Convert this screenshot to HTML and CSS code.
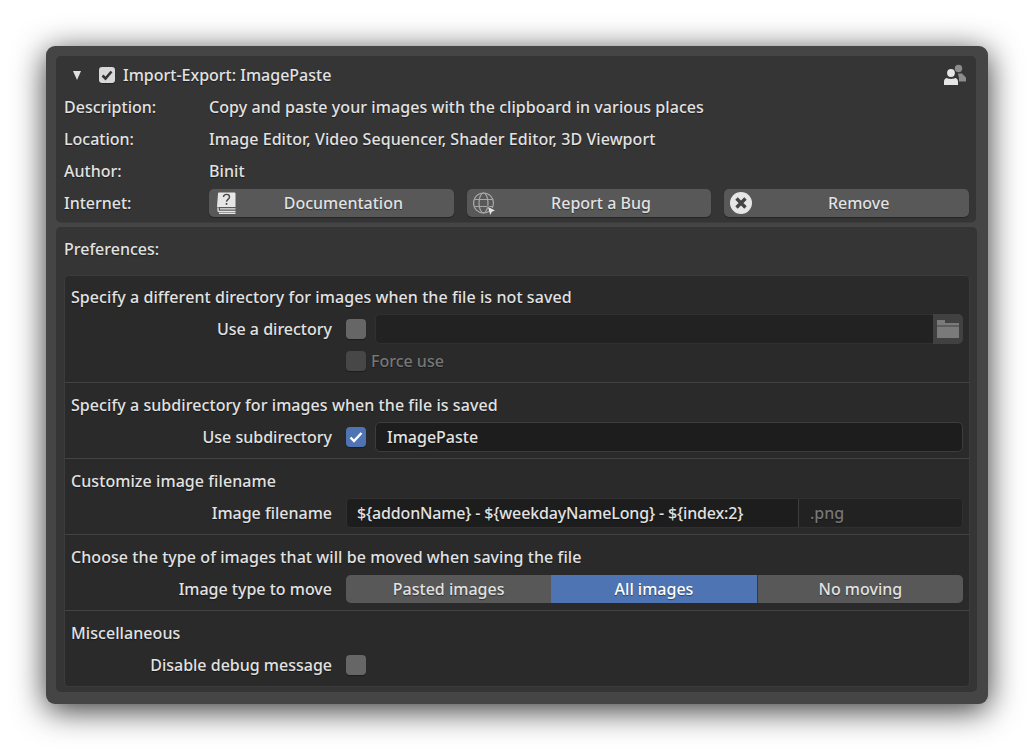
FILE: index.html
```html
<!DOCTYPE html>
<html lang="en">
<head>
    <meta charset="UTF-8">
    <title>Import-Export: ImagePaste</title>
    <link rel="stylesheet" href="styles.css">
</head>
<body>
    <div class="window">
        <div class="addon-panel">
            <div class="addon-head">
                <span class="arrow"></span>
                <span class="check check-light">
                    <svg viewBox="0 0 16 16" width="16" height="16"><path d="M3.500 8.500l3 3 6-7" fill="none" stroke="#333" stroke-width="2.600"/></svg>
                </span>
                <span class="addon-title">Import-Export: ImagePaste</span>
                <svg class="users-icon" viewBox="0 0 22 22" width="22" height="22">
                    <circle cx="14.500" cy="4.500" r="3.700" fill="#8c8c8c"/>
                    <path d="M14 9.500h4l4 4v4h-7z" fill="#8c8c8c"/>
                    <path d="M-1 22v-7l4-3 3-6h4l3 3 2 5v8z" fill="#353535"/>
                    <circle cx="7" cy="9" r="3.900" fill="#e6e6e6"/>
                    <path d="M0 21v-3.500c0-2 1.500-3.500 3-3.500 1.500 1.200 6.500 1.200 8 0 1.500 0 3 1.500 3 3.500V21z" fill="#e6e6e6"/>
                </svg>
            </div>
            <div class="info-row"><span class="info-label">Description:</span><span class="info-text">Copy and paste your images with the clipboard in various places</span></div>
            <div class="info-row"><span class="info-label">Location:</span><span class="info-text">Image Editor, Video Sequencer, Shader Editor, 3D Viewport</span></div>
            <div class="info-row"><span class="info-label">Author:</span><span class="info-text">Binit</span></div>
            <div class="info-row">
                <span class="info-label">Internet:</span>
                <div class="link-buttons">
                    <div class="link-btn">
                        <svg class="btn-icon" viewBox="0 0 19 24" width="19" height="24">
                            <path d="M1 2.500a1 1 0 0 1 1-1h15.500a1 1 0 0 1 1 1V16H0z" fill="#e6e6e6"/>
                            <path d="M1 16.500v3c0 .8.5 1 1 1h16.500" fill="none" stroke="#e6e6e6" stroke-width="1.300"/>
                            <path d="M3 17.800h15.500M2 22.300h16.500" stroke="#e6e6e6" stroke-width="1.300"/>
                            <path d="M6.500 6c0-3.500 6-3.500 6 0 0 2.500-3 2.300-3 4.800" fill="none" stroke="#444" stroke-width="1.400"/>
                            <path d="M8.700 12h1.600v1.800H8.700z" fill="#444"/>
                        </svg>
                        <span>Documentation</span>
                    </div>
                    <div class="link-btn">
                        <svg class="btn-icon" viewBox="0 0 24 24" width="24" height="24">
                            <g fill="none" stroke="#a8a8a8" stroke-width="1.200">
                                <circle cx="10.500" cy="11" r="10"/>
                                <ellipse cx="10.500" cy="11" rx="4.500" ry="10"/>
                                <path d="M1.500 7.500h18M1.500 14.500h18"/>
                            </g>
                            <path d="M14 13.500l9 4.800-3.600 1.200-1.500 3.500z" fill="#595959"/>
                            <path d="M15 15l7 3.500-3.200 1.200-1.500 3.300z" fill="#e6e6e6"/>
                        </svg>
                        <span>Report a Bug</span>
                    </div>
                    <div class="link-btn">
                        <svg class="btn-icon" viewBox="0 0 22 22" width="22" height="22">
                            <circle cx="11" cy="11" r="11" fill="#e6e6e6"/>
                            <path d="M6.500 6.500l9 9M15.500 6.500l-9 9" stroke="#444" stroke-width="3.400"/>
                        </svg>
                        <span>Remove</span>
                    </div>
                </div>
            </div>
        </div>

        <div class="prefs-panel">
            <div class="prefs-title">Preferences:</div>
            <div class="prefs-box">
                <div class="section">
                    <div class="section-title">Specify a different directory for images when the file is not saved</div>
                    <div class="pref-row">
                        <span class="pref-label">Use a directory</span>
                        <span class="check"></span>
                        <div class="dir-field">
                            <div class="dir-input"></div>
                            <div class="folder-btn">
                                <svg viewBox="0 0 22 20" width="22" height="20"><path d="M0 1h8v3h14v2.500H0zM0 7.500h22V19H0z" fill="#7a7a7a"/></svg>
                            </div>
                        </div>
                    </div>
                    <div class="pref-row">
                        <span class="pref-label"></span>
                        <span class="check check-off"></span>
                        <span class="dim-label">Force use</span>
                    </div>
                </div>
                <div class="section">
                    <div class="section-title">Specify a subdirectory for images when the file is saved</div>
                    <div class="pref-row">
                        <span class="pref-label">Use subdirectory</span>
                        <span class="check check-on">
                            <svg viewBox="0 0 16 16" width="16" height="16"><path d="M2.500 8.500l3.500 3.500 7.500-8" fill="none" stroke="#fff" stroke-width="2.400"/></svg>
                        </span>
                        <div class="text-input">ImagePaste</div>
                    </div>
                </div>
                <div class="section">
                    <div class="section-title">Customize image filename</div>
                    <div class="pref-row">
                        <span class="pref-label">Image filename</span>
                        <div class="name-field">
                            <div class="name-input">${addonName} - ${weekdayNameLong} - ${index:2}</div>
                            <div class="name-ext">.png</div>
                        </div>
                    </div>
                </div>
                <div class="section">
                    <div class="section-title">Choose the type of images that will be moved when saving the file</div>
                    <div class="pref-row">
                        <span class="pref-label">Image type to move</span>
                        <div class="segments">
                            <div class="segment">Pasted images</div>
                            <div class="segment segment-active">All images</div>
                            <div class="segment">No moving</div>
                        </div>
                    </div>
                </div>
                <div class="section">
                    <div class="section-title">Miscellaneous</div>
                    <div class="pref-row">
                        <span class="pref-label">Disable debug message</span>
                        <span class="check"></span>
                    </div>
                </div>
            </div>
        </div>
    </div>
</body>
</html>
```

FILE: styles.css
```css
html, body {
    margin: 0;
    height: 100%;
    background-color: #fff;
}
body {
    padding: 46px 46px 0;
    box-sizing: border-box;
    overflow: hidden;
    font-family: "Noto Sans", sans-serif;
    font-size: 16px;
    font-weight: 500;
    color: #e2e2e2;
    text-shadow: 0 1px 1px rgba(0, 0, 0, 0.45);
}
.window {
    width: 942px;
    height: 658px;
    box-sizing: border-box;
    padding: 10px 12px 0 10px;
    background-color: #454545;
    border-radius: 9px;
    box-shadow: 0 6px 32px rgba(0, 0, 0, 0.8);
}

/* add-on info */
.addon-panel {
    height: 166px;
    padding: 3px 0 0 8px;
    box-sizing: border-box;
    background-color: #353535;
    border-radius: 5px;
    box-shadow: 0 1px 0 #3c3c3c;
}
.addon-head {
    height: 32px;
    display: flex;
    align-items: center;
    padding-left: 9px;
}
.arrow {
    width: 0;
    height: 0;
    border-left: 4.5px solid transparent;
    border-right: 4.5px solid transparent;
    border-top: 9px solid #e0e0e0;
    margin-right: 18px;
}
.addon-title {
    margin-left: 8px;
}
.users-icon {
    margin-left: auto;
    margin-right: 10px;
}
.info-row {
    height: 32px;
    display: flex;
    align-items: center;
}
.info-label {
    width: 145px;
    flex: none;
}
.info-text {
    letter-spacing: 0.07px;
}
.link-buttons {
    width: 760px;
    display: flex;
    gap: 13px;
}
.link-btn {
    flex: 1;
    height: 28px;
    position: relative;
    display: flex;
    align-items: center;
    justify-content: center;
    padding-left: 24px;
    box-sizing: border-box;
    background-color: #585858;
    border-radius: 5px;
    box-shadow: 0 1px 1px rgba(0, 0, 0, 0.3);
}
.btn-icon {
    position: absolute;
    left: 8px;
    top: 2px;
}
.link-btn:nth-child(2) .btn-icon {
    left: 6px;
    top: 3px;
}
.link-btn:nth-child(3) .btn-icon {
    left: 6px;
    top: 3px;
}

/* preferences */
.prefs-panel {
    height: 465px;
    margin-top: 5px;
    margin-right: -1px;
    padding: 0 7px 0 8px;
    box-sizing: border-box;
    background-color: #353535;
    border-radius: 5px;
}
.prefs-title {
    height: 48px;
    line-height: 44px;
}
.prefs-box {
    height: 412px;
    box-sizing: border-box;
    background-color: #2a2a2a;
    border: 1px solid #3c3c3c;
    border-radius: 5px;
}
.section {
    padding: 6px 6px 5px;
    border-bottom: 1px solid #434343;
}
.section:first-child {
    padding-top: 5px;
}
.section:last-child {
    border-bottom: none;
}
.section-title {
    height: 32px;
    line-height: 32px;
    letter-spacing: 0.07px;
}
.pref-row {
    height: 32px;
    display: flex;
    align-items: center;
}
.pref-label {
    width: 261px;
    margin-right: 14px;
    flex: none;
    text-align: right;
}
.check {
    width: 20px;
    height: 20px;
    flex: none;
    display: flex;
    align-items: center;
    justify-content: center;
    background-color: #666;
    border-radius: 4px;
    box-shadow: 0 1px 1px rgba(0, 0, 0, 0.3);
}
.check-light {
    width: 16px;
    height: 16px;
    background-color: #d8d8d8;
    border-radius: 3px;
}
.check-off {
    background-color: #474747;
}
.check-on {
    background-color: #4f74b3;
}
.dim-label {
    margin-left: 5px;
    color: #777;
}
.dir-field {
    flex: 1;
    height: 30px;
    margin-left: 9px;
    display: flex;
}
.dir-input {
    flex: 1;
    background-color: #222;
    border: 1px solid #303030;
    border-right: none;
    border-radius: 5px 0 0 5px;
}
.folder-btn {
    width: 30px;
    display: flex;
    align-items: center;
    justify-content: center;
    background-color: #414141;
    border-radius: 0 5px 5px 0;
}
.text-input {
    flex: 1;
    height: 30px;
    margin-left: 9px;
    padding-left: 11px;
    line-height: 28px;
    box-sizing: border-box;
    background-color: #1d1d1d;
    border: 1px solid #3d3d3d;
    border-radius: 5px;
}
.name-field {
    flex: 1;
    height: 30px;
    display: flex;
    box-sizing: border-box;
    border: 1px solid #303030;
    border-radius: 5px;
    overflow: hidden;
}
.name-input {
    width: 452px;
    padding-left: 10px;
    line-height: 28px;
    letter-spacing: -0.15px;
    box-sizing: border-box;
    background-color: #1d1d1d;
    border-right: 1px solid #3d3d3d;
}
.name-ext {
    flex: 1;
    padding-left: 11px;
    line-height: 28px;
    background-color: #222;
    color: #777;
}
.segments {
    flex: 1;
    height: 28px;
    display: flex;
    gap: 1px;
    border-radius: 5px;
    overflow: hidden;
    background-color: #3a3a3a;
}
.segment {
    flex: 1;
    line-height: 28px;
    text-align: center;
    background-color: #585858;
}
.segment-active {
    margin-left: -1px;
    background-color: #4f74b3;
    color: #fff;
}
```
